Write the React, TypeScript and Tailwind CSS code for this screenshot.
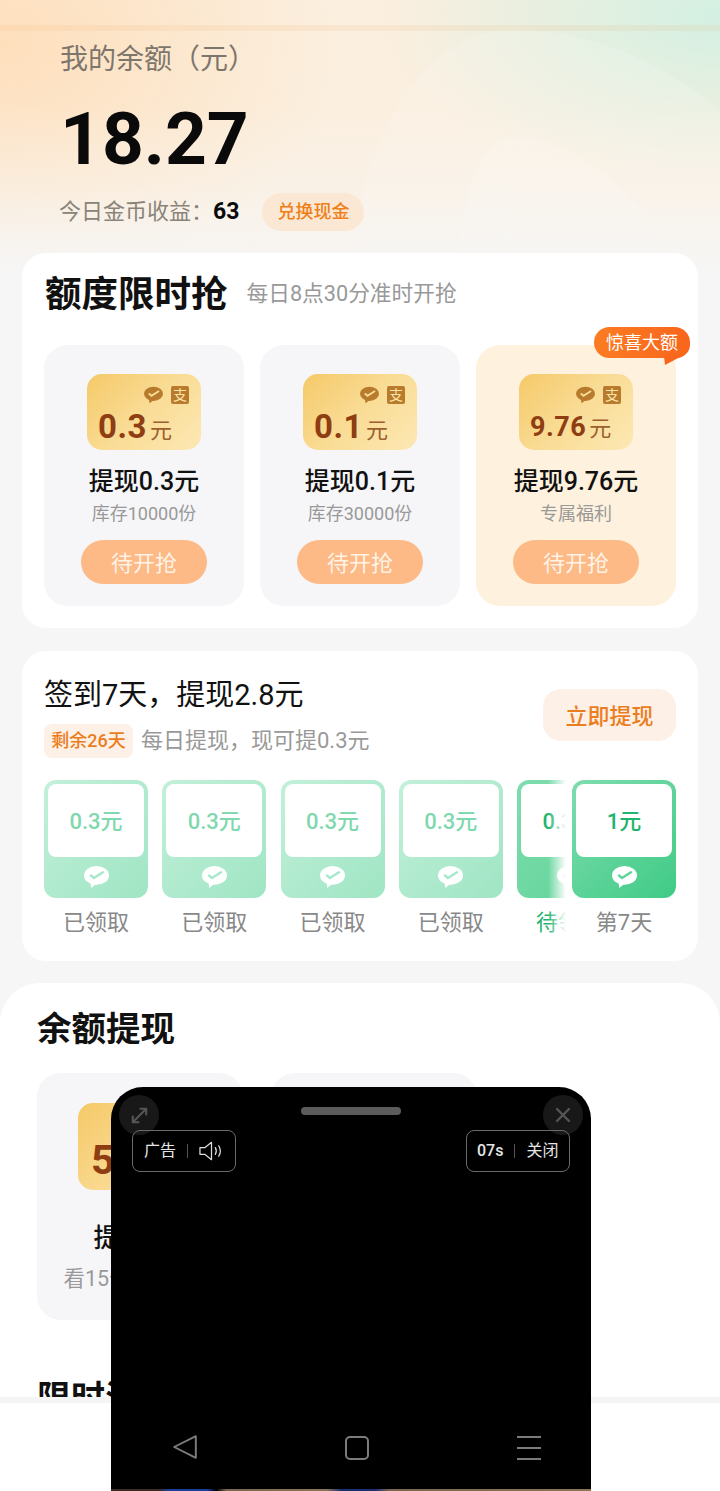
import { MoveDiagonal, X } from 'lucide-react';

const FONT = 'font-[Roboto,"Noto_Sans_CJK_SC",sans-serif]';

function WechatIcon({ fill, check, className }: { fill: string; check: string; className: string }) {
  return (
    <svg viewBox="0 0 24 21" className={className}>
      <ellipse cx="12" cy="9" rx="12" ry="9" fill={fill} />
      <path d="M6 15 L7 21 L12 17 Z" fill={fill} />
      <path d="M6 8.5 L9.5 11.5 L19 5.5" fill="none" stroke={check} strokeWidth="2.4" strokeLinejoin="miter" />
    </svg>
  );
}

function Coupon({ amount, small }: { amount: string; small?: boolean }) {
  return (
    <div className="w-[114px] h-[76px] rounded-[15px] bg-[linear-gradient(135deg,#f5c968_0%,#f9dc95_50%,#fde8b4_100%)] flex flex-col">
      <div className="flex justify-end items-center gap-[8px] pt-[11px] pr-[12px] h-[30px]">
        <WechatIcon fill="#b87a2c" check="#f9dc95" className="w-[19px] h-[18px]" />
        <span className="w-[18px] h-[18px] bg-[#b87a2c] rounded-[2px] text-[#fbe3a8] text-[14px] leading-[18px] text-center">支</span>
      </div>
      <div className="flex items-baseline pl-[11px] mt-[5px] leading-[36px]">
        <span className={`font-bold text-[#8f3d12] tracking-[0.5px] ${small ? 'text-[27px]' : 'text-[33px]'}`}>{amount}</span>
        <span className="text-[22px] text-[#9b5f30] ml-[3px]">元</span>
      </div>
    </div>
  );
}

function GrabCard({ amount, title, sub, hot, small }: { amount: string; title: string; sub: string; hot?: boolean; small?: boolean }) {
  return (
    <div className={`w-[200px] h-[261px] rounded-[24px] flex flex-col items-center pt-[29px] ${hot ? 'bg-[#fef1dd]' : 'bg-[#f6f6f8]'}`}>
      <Coupon amount={amount} small={small} />
      <div className="mt-[16px] text-[25px] leading-[32px] font-medium text-[#111] whitespace-nowrap">{title}</div>
      <div className="mt-[4px] text-[18px] leading-[24px] text-[#999]">{sub}</div>
      <div className="mt-[14px] w-[126px] h-[44px] rounded-full bg-[#fdba86] text-[#fff3e6] text-[22px] leading-[47px] text-center">待开抢</div>
    </div>
  );
}

function DayTile({ value, label, tone }: { value: string; label: string; tone: 'done' | 'today' | 'last' }) {
  const bg = tone === 'done'
    ? 'bg-[linear-gradient(135deg,#c3f0da,#9fe5c4)]'
    : tone === 'today'
      ? 'bg-[linear-gradient(135deg,#7fdcae,#5fd498)]'
      : 'bg-[linear-gradient(135deg,#7fdcae,#3fcb86)]';
  const valueColor = tone === 'done' ? 'text-[#7fd8ae]' : 'text-[#1fb46f]';
  const check = tone === 'done' ? '#a8e8ca' : '#5fd498';
  return (
    <div className="w-[104px] shrink-0 flex flex-col items-center bg-white">
      <div className={`w-[104px] h-[118px] rounded-[12px] p-[4px] flex flex-col items-center ${bg}`}>
        <div className={`w-[96px] h-[73px] bg-white rounded-[8px] text-center text-[22px] leading-[76px] font-medium ${valueColor}`}>{value}</div>
        <WechatIcon fill="#ffffff" check={check} className="w-[25px] h-[22px] mt-[9px]" />
      </div>
      <div className={`mt-[11px] text-[22px] leading-[28px] ${tone === 'today' ? 'text-[#1fb46f]' : 'text-[#888]'}`}>{label}</div>
    </div>
  );
}

export default function App() {
  return (
    <div className={`relative w-[720px] h-[1491px] overflow-hidden bg-[#f6f6f6] ${FONT}`}>
      {/* fond du haut */}
      <div className="absolute left-0 top-0 w-[720px] h-[300px] bg-[radial-gradient(ellipse_340px_240px_at_0%_15%,#fedfbc,transparent),radial-gradient(ellipse_340px_170px_at_100%_5%,#d3f0e2,transparent),linear-gradient(#fbefdf,#fbefdf)]" />
      <svg viewBox="0 0 720 300" className="absolute left-0 top-0 w-[720px] h-[300px]">
        <path d="M350 300 C350 150 420 30 510 30 C590 30 660 60 720 110 V300 Z" fill="#ffffff" fillOpacity="0.14" />
        <path d="M455 300 C460 190 480 137 515 137 C570 137 650 190 690 300 Z" fill="#ffffff" fillOpacity="0.2" />
      </svg>
      <div className="absolute left-0 top-0 w-[720px] h-[300px] bg-[linear-gradient(transparent_35%,rgba(246,246,246,0.3)_62%,#f6f6f6_92%)]" />
      <div className="absolute left-0 top-[25px] w-[720px] h-[6px] bg-[#e8a050]/10" />

      <div className="relative">
        <div className="pl-[60px] pt-[41px] text-[28px] leading-[38px] text-[#7d766c]">我的余额（元）</div>
        <div className="pl-[60px] mt-[20px] text-[73px] leading-[80px] font-bold text-[#0a0a0a]">18.27</div>
        <div className="pl-[59px] mt-[14px] h-[38px] flex items-center">
          <span className="text-[22px] leading-[38px] text-[#8a8378]">今日金币收益：</span>
          <span className="text-[23px] font-bold text-[#0a0a0a]">63</span>
          <span className="ml-[23px] w-[102px] h-[38px] rounded-full bg-[#fbe8d4] text-center text-[18px] leading-[38px] font-medium text-[#ef7f1a]">兑换现金</span>
        </div>

        <div className="relative mx-[22px] mt-[22px] bg-white rounded-[24px] px-[22px] pt-[20px] pb-[22px]">
          <div className="flex items-center h-[42px]">
            <span className="ml-[1px] text-[36.5px] leading-[43px] font-bold text-[#111]">额度限时抢</span>
            <span className="ml-[19px] text-[21.7px] leading-[44px] text-[#999]">每日8点30分准时开抢</span>
          </div>
          <div className="flex gap-[16px] mt-[30px]">
            <GrabCard amount="0.3" title="提现0.3元" sub="库存10000份" />
            <GrabCard amount="0.1" title="提现0.1元" sub="库存30000份" />
            <GrabCard amount="9.76" title="提现9.76元" sub="专属福利" hot small />
          </div>
          {/* badge au-dessus de la 3e carte */}
          <div className="absolute left-[572px] top-[74px] w-[96px] h-[31px] rounded-t-[16px] rounded-bl-[16px] rounded-br-[14px] bg-[linear-gradient(90deg,#fb7c22,#f9651c)] text-white text-[18px] leading-[32px] text-center">
            惊喜大额
            <svg viewBox="0 0 18 10" className="absolute right-[8px] top-[29px] w-[18px] h-[10px]">
              <path d="M0 0 H18 L1 9 Z" fill="#f9651c" />
            </svg>
          </div>
        </div>

        <div className="mx-[22px] mt-[23px] bg-white rounded-[24px] px-[22px] pt-[26px] pb-[24px]">
          <div className="flex justify-between items-start">
            <div>
              <div className="text-[29px] leading-[37px] text-[#111]">签到7天，提现2.8元</div>
              <div className="flex items-center mt-[10px]">
                <span className="w-[89px] h-[34px] rounded-[8px] bg-[#fdf0e6] text-center text-[18px] leading-[34px] font-medium text-[#ec7d1e]">剩余26天</span>
                <span className="ml-[8px] text-[22px] leading-[34px] text-[#999]">每日提现，现可提0.3元</span>
              </div>
            </div>
            <div className="mt-[12px] w-[133px] h-[52px] rounded-[18px] bg-[#fdf0e6] text-center text-[22px] leading-[55px] font-medium text-[#ec7d1e]">立即提现</div>
          </div>
          <div className="relative flex gap-[14.25px] mt-[22px] overflow-hidden">
            <DayTile value="0.3元" label="已领取" tone="done" />
            <DayTile value="0.3元" label="已领取" tone="done" />
            <DayTile value="0.3元" label="已领取" tone="done" />
            <DayTile value="0.3元" label="已领取" tone="done" />
            <DayTile value="0.3元" label="待领取" tone="today" />
            <div className="absolute right-[104px] top-0 w-[24px] h-[157px] bg-[linear-gradient(90deg,transparent,#ffffff_75%)]" />
            <div className="absolute right-0 top-0">
              <DayTile value="1元" label="第7天" tone="last" />
            </div>
          </div>
        </div>

        <div className="mt-[22px] bg-white rounded-t-[40px] px-[37px] pt-[24px] h-[520px]">
          <div className="text-[34.5px] leading-[44px] font-bold text-[#111]">余额提现</div>
          <div className="flex gap-[28px] mt-[22px]">
            <div className="w-[206px] h-[247px] rounded-[24px] bg-[#f6f6f8] flex flex-col items-center pt-[30px]">
              <div className="w-[124px] h-[87px] rounded-[15px] bg-[linear-gradient(135deg,#f5c968,#fde8b4)] pl-[13px] pt-[34px] text-[41px] leading-[46px] font-bold text-[#8f3d12]">5</div>
              <div className="mt-[32px] text-[26px] leading-[32px] font-medium text-[#111]">提现5元</div>
              <div className="mt-[11px] text-[21.5px] leading-[28px] text-[#999] whitespace-nowrap">看15个视频提现</div>
            </div>
            <div className="w-[206px] h-[247px] rounded-[24px] bg-[#f6f6f8]" />
          </div>
          <div className="mt-[56px] text-[34px] leading-[44px] font-bold text-[#111]">限时活动</div>
        </div>
      </div>

      {/* barre du bas */}
      <div className="absolute left-0 bottom-0 w-[720px] h-[94px] bg-white border-t-[6px] border-[#f5f5f5]" />

      {/* mini lecteur pub */}
      <div className="absolute left-[111px] top-[1087px] w-[480px] h-[404px] bg-black rounded-t-[32px] overflow-hidden">
        <div className="absolute left-[190px] top-[20px] w-[100px] h-[8px] rounded-full bg-[#5c5c5c]" />
        <div className="absolute left-[8px] top-[8px] w-[40px] h-[40px] rounded-full bg-[#181818] flex items-center justify-center">
          <MoveDiagonal className="w-[23px] h-[23px] text-[#555]" strokeWidth={2.2} />
        </div>
        <div className="absolute right-[8px] top-[8px] w-[40px] h-[40px] rounded-full bg-[#181818] flex items-center justify-center">
          <X className="w-[24px] h-[24px] text-[#555]" strokeWidth={2.4} />
        </div>
        <div className="absolute left-[21px] top-[43px] w-[104px] h-[42px] rounded-[8px] border border-[#6a6a6a] flex items-center pl-[11px] text-[16px] text-[#e6e6e6]">
          广告
          <span className="w-px h-[14px] bg-[#555] ml-[11px] mr-[11px]" />
          <svg viewBox="0 0 26 20" className="w-[25px] h-[20px]" fill="none" stroke="#dcdcdc" strokeWidth="1.3" strokeLinejoin="round" strokeLinecap="round">
            <path d="M1 6.5 H6 L13 1 V19 L6 13.5 H1 Z" />
            <path d="M17 6.5 Q19 10 17 13.5" />
            <path d="M20.5 4.5 Q24 10 20.5 15.5" />
          </svg>
        </div>
        <div className="absolute right-[21px] top-[43px] w-[104px] h-[42px] rounded-[8px] border border-[#6a6a6a] flex items-center pl-[10px] text-[16px] text-[#e6e6e6]">
          <span className="font-medium">07s</span>
          <span className="w-px h-[14px] bg-[#555] ml-[11px] mr-[11px]" />
          关闭
        </div>
        <svg viewBox="0 0 24 24" className="absolute left-[61px] top-[347px] w-[26px] h-[26px]" fill="none" stroke="#7c7c7c" strokeWidth="1.8" strokeLinejoin="round">
          <path d="M22 2 V22 L2 12 Z" />
        </svg>
        <div className="absolute left-[234px] top-[349px] w-[24px] h-[24px] rounded-[5px] border-2 border-[#7c7c7c]" />
        <div className="absolute left-[406px] top-[349px] w-[24px] h-[24px] flex flex-col justify-between">
          <div className="h-[2px] bg-[#7c7c7c]" />
          <div className="h-[2px] bg-[#7c7c7c]" />
          <div className="h-[2px] bg-[#7c7c7c]" />
        </div>
        <div className="absolute left-0 bottom-0 w-[480px] h-[2px] bg-[linear-gradient(90deg,#3a2a20_0%,#3a2a20_10%,#1d3f9a_12%,#1d3f9a_20%,#000_22%,#7a6650_24%,#8a7358_45%,#1a2f70_48%,#1a2f70_55%,#7a6650_58%,#8a7358_100%)]" />
      </div>
    </div>
  );
}
